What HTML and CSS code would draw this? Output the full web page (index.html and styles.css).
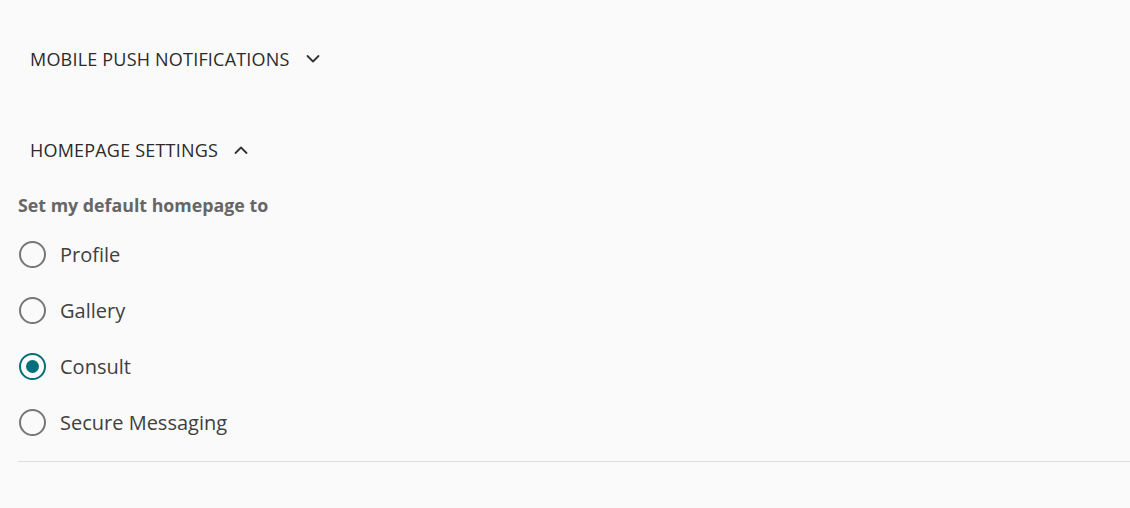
FILE: index.html
```html
<!DOCTYPE html>
<html>
<head>
<meta charset="utf-8">
<link rel="stylesheet" href="styles.css">
</head>
<body>
<div class="page">
  <section class="section">
    <button class="section-head">
      <span>MOBILE PUSH NOTIFICATIONS</span>
      <svg class="chev" width="14" height="14" viewBox="0 0 14 14"><path d="M1.5 4 L7 9.5 L12.5 4" fill="none" stroke="#333" stroke-width="1.8" stroke-linecap="round" stroke-linejoin="round"/></svg>
    </button>
  </section>
  <section class="section open">
    <button class="section-head">
      <span>HOMEPAGE SETTINGS</span>
      <svg class="chev" width="14" height="14" viewBox="0 0 14 14"><path d="M1.5 10 L7 4.5 L12.5 10" fill="none" stroke="#333" stroke-width="1.8" stroke-linecap="round" stroke-linejoin="round"/></svg>
    </button>
    <div class="body">
      <div class="legend">Set my default homepage to</div>
      <label class="radio"><span class="circle"></span><span>Profile</span></label>
      <label class="radio"><span class="circle"></span><span>Gallery</span></label>
      <label class="radio"><span class="circle checked"></span><span>Consult</span></label>
      <label class="radio"><span class="circle"></span><span>Secure Messaging</span></label>
    </div>
  </section>
  <hr class="divider">
</div>
</body>
</html>
```
FILE: styles.css
```css
html, body {
  margin: 0;
  padding: 0;
  background: #fafafa;
}
body {
  font-family: "Open Sans", "Noto Sans", sans-serif;
  color: #333;
}
.page {
  padding: 40px 0 0 18px;
}
.section-head {
  display: flex;
  align-items: center;
  gap: 16px;
  background: none;
  border: 0;
  padding: 0 0 0 12px;
  height: 38px;
  font-family: inherit;
  font-size: 18px;
  font-weight: 500;
  letter-spacing: 0.2px;
  color: #2b2b2b;
}
.section {
  margin-bottom: 53px;
}
.section.open {
  margin-bottom: 0;
}
.body {
  padding-top: 25px;
}
.legend {
  font-size: 17.8px;
  font-weight: 700;
  color: #666;
  line-height: 22px;
  margin-bottom: 10px;
}
.radio {
  display: flex;
  align-items: center;
  gap: 14px;
  height: 56px;
  font-size: 20px;
  color: #404040;
}
.circle {
  box-sizing: border-box;
  width: 27px;
  height: 27px;
  border: 2px solid #767676;
  border-radius: 50%;
  flex: none;
  position: relative;
  margin-left: 1px;
}
.circle.checked {
  border-color: #00707a;
}
.circle.checked::after {
  content: "";
  position: absolute;
  left: 5px;
  top: 5px;
  width: 13px;
  height: 13px;
  border-radius: 50%;
  background: #00707a;
}
.divider {
  border: 0;
  border-top: 1px solid #ddd;
  margin: 11px 0 0 0;
}
```
